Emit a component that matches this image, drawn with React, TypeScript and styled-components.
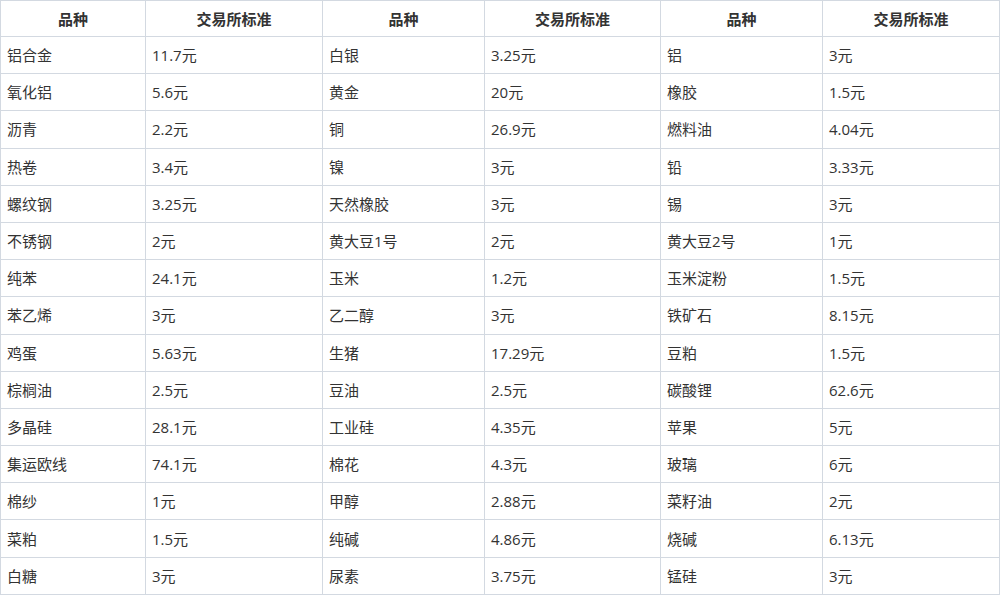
import React from 'react';
import styled, {createGlobalStyle} from 'styled-components';

const GlobalStyle = createGlobalStyle`
  html, body {
    margin: 0;
    padding: 0;
    background: #ffffff;
  }
  body {
    font-family: "Open Sans", "Noto Sans CJK SC", sans-serif;
  }
`;

const rows: string[][] = [
    ['铝合金', '11.7元', '白银', '3.25元', '铝', '3元'],
    ['氧化铝', '5.6元', '黄金', '20元', '橡胶', '1.5元'],
    ['沥青', '2.2元', '铜', '26.9元', '燃料油', '4.04元'],
    ['热卷', '3.4元', '镍', '3元', '铅', '3.33元'],
    ['螺纹钢', '3.25元', '天然橡胶', '3元', '锡', '3元'],
    ['不锈钢', '2元', '黄大豆1号', '2元', '黄大豆2号', '1元'],
    ['纯苯', '24.1元', '玉米', '1.2元', '玉米淀粉', '1.5元'],
    ['苯乙烯', '3元', '乙二醇', '3元', '铁矿石', '8.15元'],
    ['鸡蛋', '5.63元', '生猪', '17.29元', '豆粕', '1.5元'],
    ['棕榈油', '2.5元', '豆油', '2.5元', '碳酸锂', '62.6元'],
    ['多晶硅', '28.1元', '工业硅', '4.35元', '苹果', '5元'],
    ['集运欧线', '74.1元', '棉花', '4.3元', '玻璃', '6元'],
    ['棉纱', '1元', '甲醇', '2.88元', '菜籽油', '2元'],
    ['菜粕', '1.5元', '纯碱', '4.86元', '烧碱', '6.13元'],
    ['白糖', '3元', '尿素', '3.75元', '锰硅', '3元'],
];

const widths = [145, 177, 162, 176, 162, 177];

const Table = styled.table`
  width: 1000px;
  border-collapse: collapse;
  table-layout: fixed;
  color: #333333;
  font-size: 15px;
  line-height: 20px;
`;

const HeadCell = styled.th`
  height: 35px;
  padding: 0 6px;
  border: 1px solid #d3d9e1;
  font-weight: 700;
  text-align: center;
  color: #333333;
`;

const Cell = styled.td`
  height: 36.2px;
  padding: 0 6px;
  border: 1px solid #d3d9e1;
  text-align: left;
  white-space: nowrap;
`;

export default function App() {
    return (
        <>
            <GlobalStyle />
            <Table>
                <colgroup>
                    {widths.map((w, i) => <col key={i} style={{width: w}} />)}
                </colgroup>
                <thead>
                    <tr>
                        {[0, 1, 2].map(i => (
                            <React.Fragment key={i}>
                                <HeadCell>品种</HeadCell>
                                <HeadCell>交易所标准</HeadCell>
                            </React.Fragment>
                        ))}
                    </tr>
                </thead>
                <tbody>
                    {rows.map((r, i) => (
                        <tr key={i}>
                            {r.map((c, j) => <Cell key={j}>{c}</Cell>)}
                        </tr>
                    ))}
                </tbody>
            </Table>
        </>
    );
}
